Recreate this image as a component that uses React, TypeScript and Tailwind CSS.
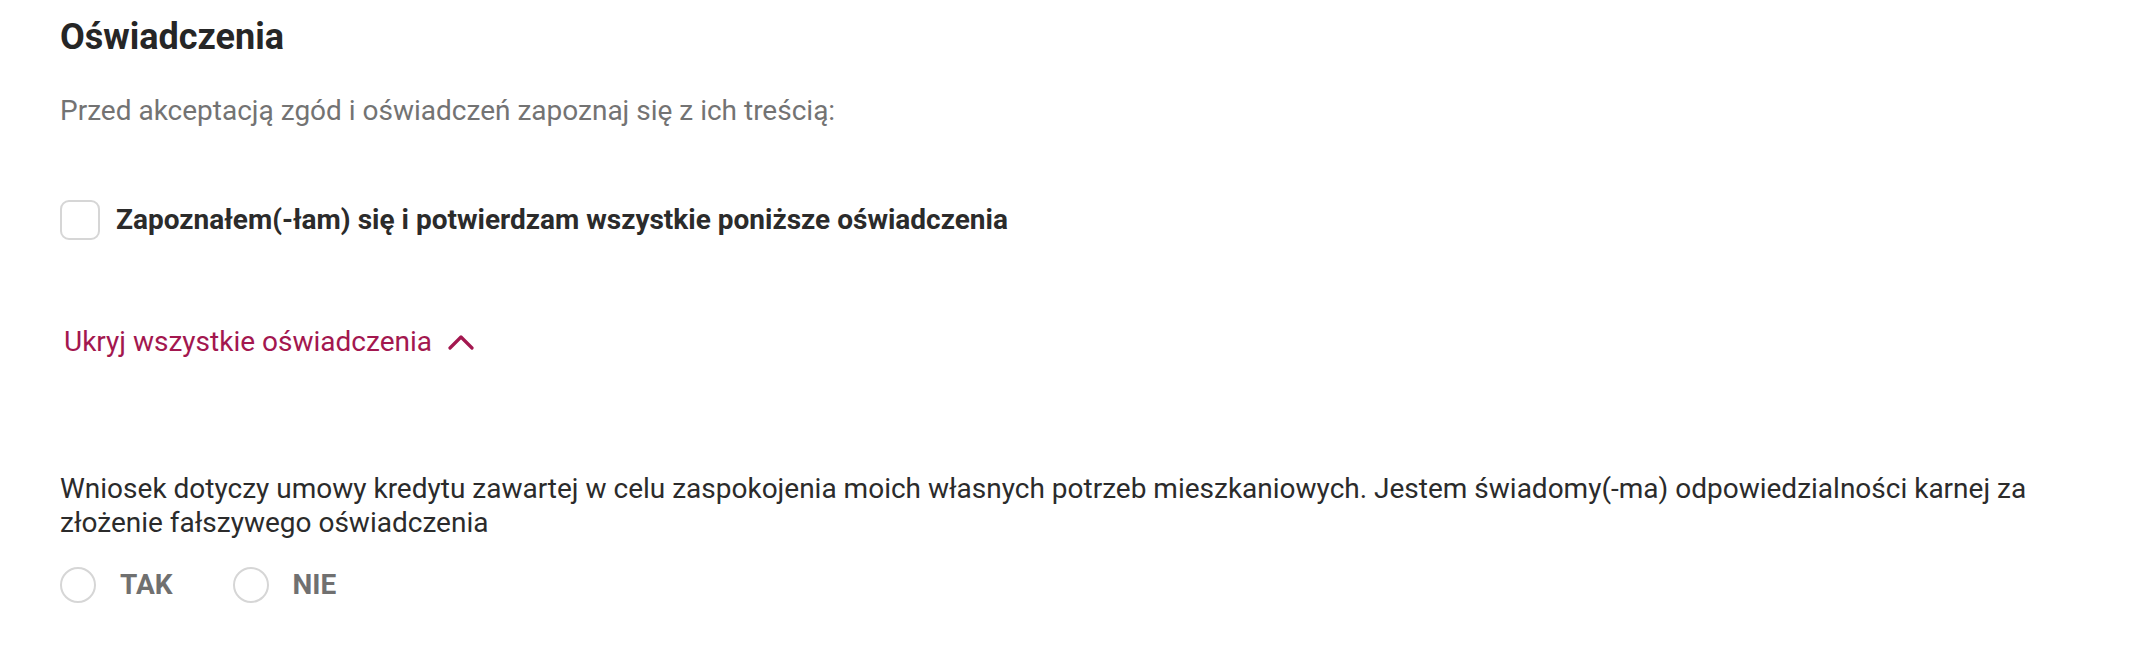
import React from "react";

function Checkbox() {
  return (
    <span className="block size-[40px] shrink-0 rounded-[9px] border-2 border-[#d6d6d6] bg-white" />
  );
}

function Radio({ label }: { label: string }) {
  return (
    <label className="flex items-center gap-[24px]">
      <span className="block size-[36px] shrink-0 rounded-full border-2 border-[#d6d6d6] bg-white" />
      <span className="text-[28px] font-bold leading-[32px] text-[#707070]">{label}</span>
    </label>
  );
}

export default function App() {
  return (
    <div
      className="h-[666px] w-full bg-white px-[60px] pt-[19px] text-[#2b2b2b]"
      style={{ fontFamily: "Roboto, 'Noto Sans', sans-serif" }}
    >
      <h2 className="text-[36px] font-bold leading-[36px] text-[#262626]">Oświadczenia</h2>
      <p className="mt-[40px] text-[28px] leading-[32px] text-[#737373]">
        Przed akceptacją zgód i oświadczeń zapoznaj się z ich treścią:
      </p>

      <div className="mt-[73px] flex items-center gap-[16px]">
        <Checkbox />
        <span className="text-[28px] font-bold leading-[32px] text-[#2b2b2b]">
          Zapoznałem(-łam) się i potwierdzam wszystkie poniższe oświadczenia
        </span>
      </div>

      <button className="mt-[86px] flex items-center gap-[16px] pl-[4px] text-[28px] leading-[32px] text-[#a3174f]">
        Ukryj wszystkie oświadczenia
        <svg width="26" height="16" viewBox="0 0 26 16" fill="none">
          <path d="M2 14L13 3L24 14" stroke="currentColor" strokeWidth="3.2" strokeLinecap="round" strokeLinejoin="round" />
        </svg>
      </button>

      <p className="mt-[114px] text-[28px] leading-[34px] text-[#2b2b2b]">
        Wniosek dotyczy umowy kredytu zawartej w celu zaspokojenia moich własnych potrzeb mieszkaniowych. Jestem świadomy(-ma) odpowiedzialności karnej za złożenie fałszywego oświadczenia
      </p>

      <div className="mt-[27px] flex items-center gap-[60px]">
        <Radio label="TAK" />
        <Radio label="NIE" />
      </div>
    </div>
  );
}
